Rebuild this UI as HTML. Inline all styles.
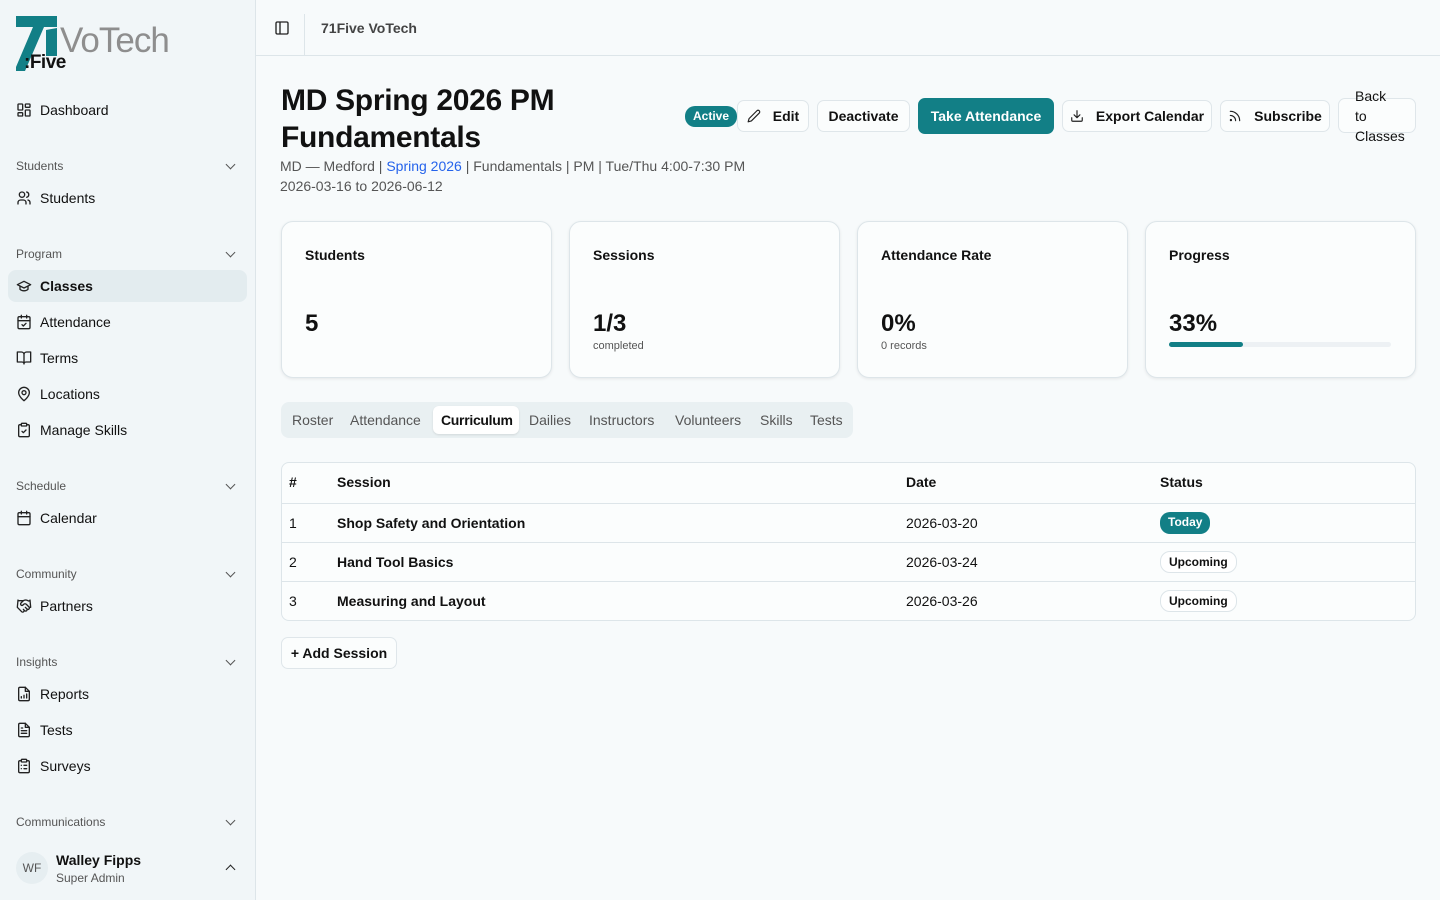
<!DOCTYPE html>
<html><head><meta charset="utf-8"><style>
*{box-sizing:border-box;margin:0;padding:0}
body{width:1440px;height:900px;overflow:hidden;font-family:"Liberation Sans",sans-serif;background:#f7fafb;color:#111;position:relative;font-size:14px}
.sb{position:absolute;left:0;top:0;width:256px;height:900px;background:#f1f6f8;border-right:1px solid #dde5e9}
.it{position:absolute;left:16px;height:20px;line-height:20px;font-size:14px;color:#111;display:flex;align-items:center}
.it svg{width:16px;height:16px;margin-right:8px;fill:none;stroke:#222;stroke-width:2;stroke-linecap:round;stroke-linejoin:round}
.gh{position:absolute;left:16px;width:224px;font-size:12px;color:#555;height:16px;line-height:16px}
.gh:after{content:"";position:absolute;right:6px;top:3px;width:6px;height:6px;border-right:1.5px solid #555;border-bottom:1.5px solid #555;transform:rotate(45deg)}
.abs{position:absolute}
.btn{position:absolute;top:100px;height:32px;border:1px solid #dfe6ea;border-radius:7px;background:#fbfdfd;font-size:14px;font-weight:bold;color:#111;display:flex;align-items:center;justify-content:center}
.btn svg{width:14px;height:14px;margin-right:12px;fill:none;stroke:#222;stroke-width:2;stroke-linecap:round;stroke-linejoin:round}
.card{position:absolute;top:221px;width:271px;height:157px;background:#fbfdfd;border:1px solid #dde5e9;border-radius:12px;box-shadow:0 1px 3px rgba(0,0,0,.08)}
.card .t{position:absolute;left:23px;top:25px;font-size:14px;font-weight:bold}
.card .v{position:absolute;left:23px;top:88px;font-size:24px;font-weight:bold}
.card .s{position:absolute;left:23px;top:118px;font-size:11px;color:#555}
.tab{position:absolute;top:410px;font-size:14px;color:#555;line-height:20px}
.row{position:absolute;left:282px;width:1133px;border-top:1px solid #dde5e9;font-size:14px}
.row span{position:absolute;top:0}
.pill{position:absolute;font-size:12px;font-weight:bold;border-radius:10px;height:22px;line-height:20px;padding:0 8px}
</style></head><body>
<div class="sb">
  <svg class="abs" style="left:15px;top:15px" width="43" height="56" viewBox="0 0 43 56"><polygon points="1,1 42,1 42,12 29,12 10,56 1,56 1,52 18,12 1,12" fill="#127f86"/><polygon points="31,15 42,13 42,41 31,41" fill="#127f86"/></svg>
  <div class="abs" style="left:60px;top:21px;font-size:35px;color:#8e8e8e;letter-spacing:-1px;line-height:40px">VoTech</div>
  <div class="abs" style="left:24px;top:52px;font-size:19px;font-weight:bold;color:#111;line-height:22px;letter-spacing:-0.5px">:Five</div>
  <div class="it" style="top:100px"><svg viewBox="0 0 24 24"><rect x="3" y="3" width="7" height="9" rx="1"/><rect x="14" y="3" width="7" height="5" rx="1"/><rect x="14" y="12" width="7" height="9" rx="1"/><rect x="3" y="16" width="7" height="5" rx="1"/></svg>Dashboard</div>
  <div class="gh" style="top:158px">Students</div>
  <div class="it" style="top:188px"><svg viewBox="0 0 24 24"><circle cx="9" cy="7" r="4"/><path d="M3 21v-2a4 4 0 0 1 4-4h4a4 4 0 0 1 4 4v2M16 3.1a4 4 0 0 1 0 7.8M21 21v-2a4 4 0 0 0-3-3.9"/></svg>Students</div>
  <div class="gh" style="top:246px">Program</div>
  <div class="abs" style="left:8px;top:270px;width:239px;height:32px;background:#e3ecef;border-radius:8px"></div>
  <div class="it" style="top:276px;font-weight:bold"><svg viewBox="0 0 24 24"><path d="M22 10 12 5 2 10l10 5 10-5z"/><path d="M6 12v5c3 3 9 3 12 0v-5"/></svg>Classes</div>
  <div class="it" style="top:312px"><svg viewBox="0 0 24 24"><rect x="3" y="4" width="18" height="18" rx="2"/><path d="M16 2v4M8 2v4M3 10h18M9 16l2 2 4-4"/></svg>Attendance</div>
  <div class="it" style="top:348px"><svg viewBox="0 0 24 24"><path d="M2 3h6a4 4 0 0 1 4 4v14a3 3 0 0 0-3-3H2zM22 3h-6a4 4 0 0 0-4 4v14a3 3 0 0 1 3-3h7z"/></svg>Terms</div>
  <div class="it" style="top:384px"><svg viewBox="0 0 24 24"><path d="M20 10c0 6-8 12-8 12s-8-6-8-12a8 8 0 0 1 16 0z"/><circle cx="12" cy="10" r="3"/></svg>Locations</div>
  <div class="it" style="top:420px"><svg viewBox="0 0 24 24"><rect x="8" y="2" width="8" height="4" rx="1"/><path d="M16 4h2a2 2 0 0 1 2 2v14a2 2 0 0 1-2 2H6a2 2 0 0 1-2-2V6a2 2 0 0 1 2-2h2M9 14l2 2 4-4"/></svg>Manage Skills</div>
  <div class="gh" style="top:478px">Schedule</div>
  <div class="it" style="top:508px"><svg viewBox="0 0 24 24"><rect x="3" y="4" width="18" height="18" rx="2"/><path d="M16 2v4M8 2v4M3 10h18"/></svg>Calendar</div>
  <div class="gh" style="top:566px">Community</div>
  <div class="it" style="top:596px"><svg viewBox="0 0 24 24"><path d="M11 17l2 2a1 1 0 1 0 3-3M14 14l2.5 2.5a1 1 0 1 0 3-3l-3.9-3.9a3 3 0 0 0-4.2 0l-.9.9a1 1 0 1 1-3-3l2.8-2.8a6 6 0 0 1 7.3-.8l.5.3a2 2 0 0 0 1.4.2L21 4M21 3l1 11h-2M3 3 2 14l6.5 6.5a1 1 0 1 0 3-3M3 4h8"/></svg>Partners</div>
  <div class="gh" style="top:654px">Insights</div>
  <div class="it" style="top:684px"><svg viewBox="0 0 24 24"><path d="M14 2H6a2 2 0 0 0-2 2v16a2 2 0 0 0 2 2h12a2 2 0 0 0 2-2V8z"/><path d="M14 2v6h6M8 18v-2M12 18v-4M16 18v-6"/></svg>Reports</div>
  <div class="it" style="top:720px"><svg viewBox="0 0 24 24"><path d="M14 2H6a2 2 0 0 0-2 2v16a2 2 0 0 0 2 2h12a2 2 0 0 0 2-2V8z"/><path d="M14 2v6h6M16 13H8M16 17H8M10 9H8"/></svg>Tests</div>
  <div class="it" style="top:756px"><svg viewBox="0 0 24 24"><rect x="8" y="2" width="8" height="4" rx="1"/><path d="M16 4h2a2 2 0 0 1 2 2v14a2 2 0 0 1-2 2H6a2 2 0 0 1-2-2V6a2 2 0 0 1 2-2h2M12 11h4M12 16h4M8 11h.01M8 16h.01"/></svg>Surveys</div>
  <div class="gh" style="top:814px">Communications</div>
  <div class="abs" style="left:16px;top:852px;width:32px;height:32px;border-radius:50%;background:#e6eef1;font-size:12px;color:#555;text-align:center;line-height:32px">WF</div>
  <div class="abs" style="left:56px;top:852px;font-size:14px;font-weight:bold">Walley Fipps</div>
  <div class="abs" style="left:56px;top:871px;font-size:12px;color:#555">Super Admin</div>
  <div class="abs" style="left:227px;top:866px;width:7px;height:7px;border-left:1.8px solid #222;border-top:1.8px solid #222;transform:rotate(45deg)"></div>
</div>
<div class="abs" style="left:256px;top:0;width:1184px;height:56px;border-bottom:1px solid #dde5e9"></div>
<svg class="abs" style="left:274px;top:20px" width="16" height="16" viewBox="0 0 24 24" fill="none" stroke="#222" stroke-width="2"><rect x="3" y="3" width="18" height="18" rx="2"/><path d="M9 3v18"/></svg>
<div class="abs" style="left:304px;top:14px;width:1px;height:42px;background:#dde5e9"></div>
<div class="abs" style="left:321px;top:20px;font-size:14px;font-weight:bold;color:#444">71Five VoTech</div>
<div class="abs" style="left:281px;top:82px;font-size:30px;font-weight:bold;line-height:37px;width:380px;letter-spacing:-0.3px">MD Spring 2026 PM Fundamentals</div>
<div class="abs" style="left:280px;top:156px;font-size:14px;color:#555;line-height:20px">MD — Medford | <span style="color:#2563eb">Spring 2026</span> | Fundamentals | PM | Tue/Thu 4:00-7:30 PM<br>2026-03-16 to 2026-06-12</div>
<div class="pill" style="left:685px;top:106px;background:#127f86;color:#fff;height:21px">Active</div>
<div class="btn" style="left:737px;width:72px"><svg viewBox="0 0 24 24"><path d="M17 3a2.8 2.8 0 1 1 4 4L7.5 20.5 2 22l1.5-5.5z"/></svg>Edit</div>
<div class="btn" style="left:817px;width:93px">Deactivate</div>
<div class="btn" style="left:918px;width:136px;height:36px;top:98px;background:#127f86;border-color:#127f86;color:#fff">Take Attendance</div>
<div class="btn" style="left:1062px;width:150px"><svg viewBox="0 0 24 24"><path d="M21 15v4a2 2 0 0 1-2 2H5a2 2 0 0 1-2-2v-4M7 10l5 5 5-5M12 15V3"/></svg>Export Calendar</div>
<div class="btn" style="left:1220px;width:110px"><svg viewBox="0 0 24 24"><path d="M4 11a9 9 0 0 1 9 9M4 4a16 16 0 0 1 16 16"/><circle cx="5" cy="19" r="1"/></svg>Subscribe</div>
<div class="btn" style="left:1338px;width:78px;top:98px;height:35px"></div>
<div class="abs" style="left:1355px;top:86px;font-size:14px;line-height:20px">Back<br>to<br>Classes</div>
<div class="card" style="left:281px"><div class="t">Students</div><div class="v">5</div></div>
<div class="card" style="left:569px"><div class="t">Sessions</div><div class="v">1/3</div><div class="s">completed</div></div>
<div class="card" style="left:857px"><div class="t">Attendance Rate</div><div class="v">0%</div><div class="s">0 records</div></div>
<div class="card" style="left:1145px"><div class="t">Progress</div><div class="v">33%</div>
<div class="abs" style="left:23px;top:120px;width:222px;height:5px;background:#edf1f4;border-radius:3px"><div style="width:74px;height:5px;background:#127f86;border-radius:3px"></div></div></div>
<div class="abs" style="left:281px;top:402px;width:572px;height:36px;background:#e9f0f2;border-radius:8px"></div>
<div class="abs" style="left:433px;top:406px;width:86px;height:28px;background:#fff;border-radius:6px;box-shadow:0 1px 2px rgba(0,0,0,.1)"></div>
<div class="tab" style="left:292px">Roster</div>
<div class="tab" style="left:350px">Attendance</div>
<div class="tab" style="left:441px;color:#111;font-weight:bold;letter-spacing:-0.3px">Curriculum</div>
<div class="tab" style="left:529px">Dailies</div>
<div class="tab" style="left:589px">Instructors</div>
<div class="tab" style="left:675px">Volunteers</div>
<div class="tab" style="left:760px">Skills</div>
<div class="tab" style="left:810px">Tests</div>
<div class="abs" style="left:281px;top:462px;width:1135px;height:159px;border:1px solid #dde5e9;border-radius:8px;background:#fbfdfd"></div>
<div class="row" style="top:474px;border:none;font-weight:bold"><span style="left:7px">#</span><span style="left:55px">Session</span><span style="left:624px">Date</span><span style="left:878px">Status</span></div>
<div class="row" style="top:503px;height:40px"><span style="left:7px;top:11px">1</span><span style="left:55px;top:11px;font-weight:bold">Shop Safety and Orientation</span><span style="left:624px;top:11px">2026-03-20</span></div>
<div class="row" style="top:542px;height:40px"><span style="left:7px;top:11px">2</span><span style="left:55px;top:11px;font-weight:bold">Hand Tool Basics</span><span style="left:624px;top:11px">2026-03-24</span></div>
<div class="row" style="top:581px;height:40px"><span style="left:7px;top:11px">3</span><span style="left:55px;top:11px;font-weight:bold">Measuring and Layout</span><span style="left:624px;top:11px">2026-03-26</span></div>
<div class="pill" style="left:1160px;top:512px;background:#127f86;color:#fff">Today</div>
<div class="pill" style="left:1160px;top:551px;border:1px solid #dde5e9;background:#fff">Upcoming</div>
<div class="pill" style="left:1160px;top:590px;border:1px solid #dde5e9;background:#fff">Upcoming</div>
<div class="btn" style="left:281px;top:637px;width:116px;height:32px;font-weight:bold">+ Add Session</div>
</body></html>
